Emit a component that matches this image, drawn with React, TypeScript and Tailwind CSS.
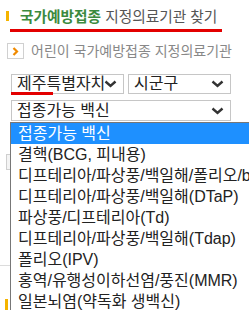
import { useState } from 'react'

const vaccines = [
  '접종가능 백신',
  '결핵(BCG, 피내용)',
  '디프테리아/파상풍/백일해/폴리오/b형헤모필루스인플루엔자',
  '디프테리아/파상풍/백일해(DTaP)',
  '파상풍/디프테리아(Td)',
  '디프테리아/파상풍/백일해(Tdap)',
  '폴리오(IPV)',
  '홍역/유행성이하선염/풍진(MMR)',
  '일본뇌염(약독화 생백신)',
]

function Chevron() {
  return (
    <svg width="13" height="8" viewBox="0 0 13 8" className="shrink-0">
      <polyline points="1.5,1.5 6.5,6 11.5,1.5" fill="none" stroke="#333" strokeWidth="2.4" />
    </svg>
  )
}

function SelectBox({ label, className }: { label: string; className: string }) {
  return (
    <div className={`flex items-center border border-[#c6c6c6] bg-white pl-[5px] pr-[6px] ${className}`}>
      <span className="flex-1 overflow-hidden whitespace-nowrap text-[16px] leading-[18px] text-[#222]">{label}</span>
      <Chevron />
    </div>
  )
}

export default function App() {
  const [selected] = useState(0)

  return (
    <div
      className="relative w-[249px] h-[310px] overflow-hidden bg-white"
      style={{ fontFamily: '"Liberation Sans", "Noto Sans CJK KR", sans-serif' }}
    >
      {/* Title */}
      <div className="flex items-start pt-[8px] pl-[6px] h-[29px]">
        <div className="w-[3px] h-[10px] mt-[3px] bg-[#f5b400]" />
        <p className="ml-[11px] text-[14.7px] leading-[18px] text-[#555] whitespace-nowrap">
          <span className="font-bold text-[#3b8a3e]">국가예방접종</span> 지정의료기관 찾기
        </p>
      </div>
      <div className="ml-[10px] w-[212px] h-[3px] bg-[#e30000]" />

      {/* Sub link */}
      <div className="flex items-center mt-[11px] pl-[7px] h-[16px]">
        <div className="w-[17px] h-[16px] border border-[#d0d0d0] flex items-center justify-center">
          <svg width="7" height="9" viewBox="0 0 7 9">
            <polyline points="1.5,1 5,4.5 1.5,8" fill="none" stroke="#f08a00" strokeWidth="2.2" />
          </svg>
        </div>
        <span className="ml-[7px] text-[14px] leading-[16px] text-[#888] whitespace-nowrap">어린이 국가예방접종 지정의료기관</span>
      </div>

      {/* Selects */}
      <div className="flex gap-[4px] mt-[15px] ml-[11px] h-[20px]">
        <SelectBox label="제주특별자치도" className="w-[113px]" />
        <SelectBox label="시군구" className="w-[103px]" />
      </div>
      <SelectBox label="접종가능 백신" className="mt-[6px] ml-[11px] w-[220px] h-[21px]" />

      {/* content beneath the open list */}
      <div className="mt-[33px] ml-[6px] w-[60px] h-[16px] border border-[#cfcfcf] bg-[#f4f4f4]" />
      <div className="mt-[95px] h-px bg-[#dcdcdc]" />
      <div className="mt-[33px] ml-[5px] w-[3px] h-[12px] bg-[#f5b400]" />

      {/* red mark under 제주 */}
      <div className="absolute left-[11px] top-[92px] w-[42px] h-[3px] bg-[#e30000]" />

      {/* open dropdown list */}
      <ul className="absolute left-[10px] top-[122px] w-[260px] bg-white border-l border-t border-[#777]">
        {vaccines.map((v, i) => (
          <li
            key={v}
            className={`h-[21px] pl-[7px] text-[16px] leading-[21px] whitespace-nowrap overflow-hidden ${
              i === selected ? 'bg-[#1e90ff] text-white' : 'text-[#222]'
            }`}
          >
            {v}
          </li>
        ))}
      </ul>
    </div>
  )
}
